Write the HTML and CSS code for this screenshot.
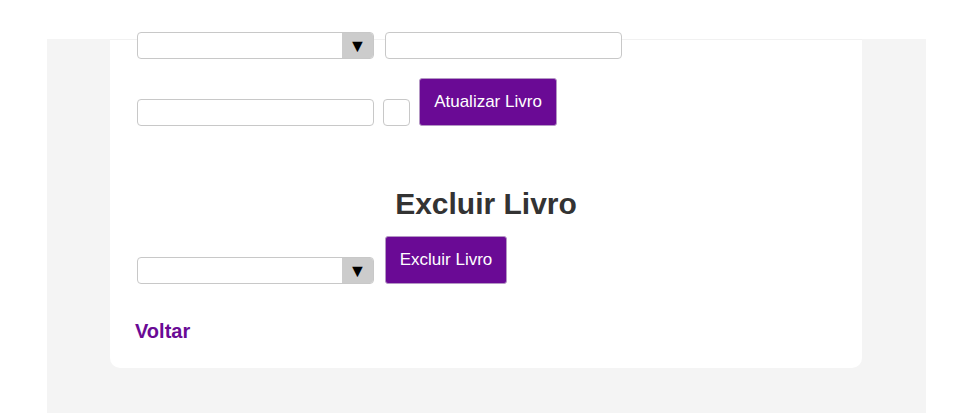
FILE: index.html
```html
<!DOCTYPE html>
<html lang="pt-BR">
<head>
<meta charset="utf-8">
<title>Livros</title>
<link rel="stylesheet" href="styles.css">
</head>
<body>
<div class="page">
  <div class="card">
    <form class="row row-1">
      <div class="select"><span class="select-arrow">▼</span></div>
      <input class="text" type="text">
    </form>
    <form class="row row-2">
      <input class="text" type="text">
      <input class="small" type="text">
      <button class="btn btn-update" type="button">Atualizar Livro</button>
    </form>
    <h2 class="title">Excluir Livro</h2>
    <form class="row row-3">
      <div class="select"><span class="select-arrow">▼</span></div>
      <button class="btn btn-delete" type="button">Excluir Livro</button>
    </form>
    <a class="back" href="#">Voltar</a>
  </div>
</div>
</body>
</html>
```
FILE: styles.css
```css
html, body {
  margin: 0;
  padding: 0;
  background: #ffffff;
  font-family: "Liberation Sans", Arial, sans-serif;
  overflow: hidden;
}
.page {
  margin: 39px 0 0 47px;
  width: 879px;
  height: 374px;
  background: #f4f4f4;
}
.card {
  margin-left: 63px;
  width: 752px;
  height: 329px;
  box-sizing: border-box;
  background: #ffffff;
  border-top: 1px solid #f1f1f1;
  border-radius: 0 0 10px 10px;
  padding: 0 27px;
}
.row {
  display: flex;
  align-items: flex-end;
  margin: 0;
}
.row-1 {
  margin-top: -8px;
}
.row-2 {
  margin-top: 19px;
}
.row-3 {
  margin-top: 15px;
}
.select {
  position: relative;
  width: 237px;
  height: 27px;
  box-sizing: border-box;
  border: 1px solid #c8c8c8;
  border-radius: 4px;
  background: #ffffff;
}
.select-arrow {
  position: absolute;
  right: 0;
  top: 0;
  bottom: 0;
  width: 31px;
  background: #cccccc;
  border-radius: 0 3px 3px 0;
  font-size: 18px;
  line-height: 27px;
  text-align: center;
  color: #000;
}
.text {
  width: 237px;
  height: 27px;
  box-sizing: border-box;
  border: 1px solid #c8c8c8;
  border-radius: 4px;
  margin: 0;
  padding: 0 8px;
  background: #fff;
}
.row-1 .text {
  margin-left: 11px;
}
.small {
  width: 27px;
  height: 27px;
  box-sizing: border-box;
  border: 1px solid #c8c8c8;
  border-radius: 4px;
  margin: 0 0 0 9px;
  padding: 0;
}
.btn {
  height: 48px;
  box-sizing: border-box;
  background: #6a0a95;
  color: #ffffff;
  border: 1px solid #b497c4;
  border-radius: 3px;
  font-family: "Liberation Sans", Arial, sans-serif;
  font-size: 17px;
  padding: 0 10px;
  margin: 0 0 0 9px;
}
.btn-update {
  width: 138px;
}
.btn-delete {
  width: 122px;
  margin-left: 11px;
}
.title {
  margin: 61px 0 0;
  text-align: center;
  font-size: 30px;
  line-height: 34px;
  font-weight: bold;
  color: #333333;
}
.back {
  display: inline-block;
  margin: 36px 0 0 -2px;
  color: #6a0a95;
  font-size: 20px;
  font-weight: bold;
  text-decoration: none;
}
```
